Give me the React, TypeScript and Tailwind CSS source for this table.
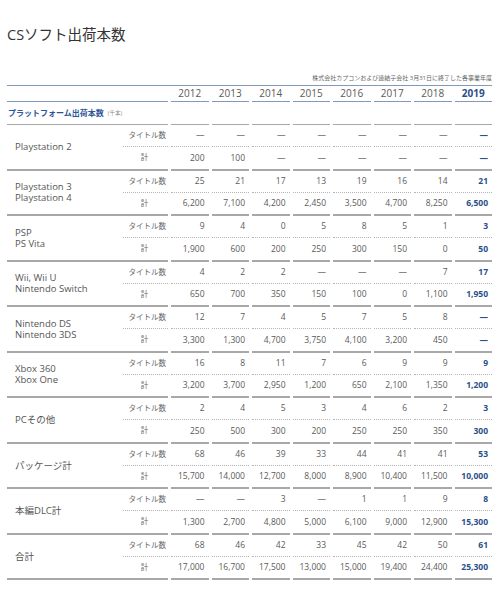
import React from 'react';

const years = ['2012', '2013', '2014', '2015', '2016', '2017', '2018', '2019'];

type Group = { name: string[]; titles: string[]; sales: string[] };

const D = '—';

const groups: Group[] = [
  { name: ['Playstation 2'], titles: [D, D, D, D, D, D, D, D], sales: ['200', '100', D, D, D, D, D, D] },
  {
    name: ['Playstation 3', 'Playstation 4'],
    titles: ['25', '21', '17', '13', '19', '16', '14', '21'],
    sales: ['6,200', '7,100', '4,200', '2,450', '3,500', '4,700', '8,250', '6,500'],
  },
  {
    name: ['PSP', 'PS Vita'],
    titles: ['9', '4', '0', '5', '8', '5', '1', '3'],
    sales: ['1,900', '600', '200', '250', '300', '150', '0', '50'],
  },
  {
    name: ['Wii, Wii U', 'Nintendo Switch'],
    titles: ['4', '2', '2', D, D, D, '7', '17'],
    sales: ['650', '700', '350', '150', '100', '0', '1,100', '1,950'],
  },
  {
    name: ['Nintendo DS', 'Nintendo 3DS'],
    titles: ['12', '7', '4', '5', '7', '5', '8', D],
    sales: ['3,300', '1,300', '4,700', '3,750', '4,100', '3,200', '450', D],
  },
  {
    name: ['Xbox 360', 'Xbox One'],
    titles: ['16', '8', '11', '7', '6', '9', '9', '9'],
    sales: ['3,200', '3,700', '2,950', '1,200', '650', '2,100', '1,350', '1,200'],
  },
  {
    name: ['PCその他'],
    titles: ['2', '4', '5', '3', '4', '6', '2', '3'],
    sales: ['250', '500', '300', '200', '250', '250', '350', '300'],
  },
  {
    name: ['パッケージ計'],
    titles: ['68', '46', '39', '33', '44', '41', '41', '53'],
    sales: ['15,700', '14,000', '12,700', '8,000', '8,900', '10,400', '11,500', '10,000'],
  },
  {
    name: ['本編DLC計'],
    titles: [D, D, '3', D, '1', '1', '9', '8'],
    sales: ['1,300', '2,700', '4,800', '5,000', '6,100', '9,000', '12,900', '15,300'],
  },
  {
    name: ['合計'],
    titles: ['68', '46', '42', '33', '45', '42', '50', '61'],
    sales: ['17,000', '16,700', '17,500', '13,000', '15,000', '19,400', '24,400', '25,300'],
  },
];

const font = { fontFamily: '"Open Sans", "Noto Sans CJK JP", sans-serif' };

export default function App() {
  return (
    <div className="w-[500px] h-[600px] bg-white text-[#5a5a5a]" style={font}>
      <div className="pl-[7px] pr-[8px]">
        <h1 className="pt-[25px] h-[74px] text-[14.5px] leading-[20px] text-[#333] font-normal">CSソフト出荷本数</h1>
        <p className="h-[11px] text-[6px] leading-[8px] text-right text-[#666]">
          株式会社カプコンおよび連結子会社 3月31日に終了した各事業年度
        </p>

        {/* table */}
        <div className="border-t border-[#8399b9] grid grid-cols-[161px_repeat(8,1fr)] gap-x-[3px]">
          {/* year header */}
          <div className="h-[16px] border-b border-[#8399b9]" />
          {years.map((y, i) => (
            <div
              key={y}
              className={
                i === 7
                  ? 'h-[16px] border-b border-[#8399b9] flex items-center justify-center text-[10px] font-bold text-[#2b4f8a]'
                  : 'h-[16px] border-b border-[#8399b9] flex items-center justify-center text-[10px] text-[#5a5a5a]'
              }
            >
              {y}
            </div>
          ))}

          {/* platform header */}
          <div className="h-[23px] border-b-[1.5px] border-[#a8a8a8] flex items-center pl-[1px] gap-[4px]">
            <span className="text-[8px] font-bold text-[#2c5597]">プラットフォーム出荷本数</span>
            <span className="text-[5.5px] text-[#888]">(千本)</span>
          </div>
          {years.map((y) => (
            <div key={y} className="h-[23px] border-b-[1.5px] border-[#a8a8a8]" />
          ))}

          {groups.map((g) => (
            <React.Fragment key={g.name.join()}>
              <div className="h-[45.5px] border-b-2 border-[#a8a8a8] flex">
                <div className="flex-1 flex flex-col justify-center pl-[8px] text-[9.5px] leading-[11px] text-[#555]">
                  {g.name.map((n) => (
                    <span key={n}>{n}</span>
                  ))}
                </div>
                <div className="w-[45px] flex flex-col text-[7.5px] text-[#666]">
                  <div className="flex-1 flex items-center justify-end pr-[2px] border-b border-dotted border-[#b5b5b5]">
                    タイトル数
                  </div>
                  <div className="flex-1 flex items-center justify-center pr-[2px]">計</div>
                </div>
              </div>
              {years.map((y, i) => (
                <div
                  key={y}
                  className={
                    i === 7
                      ? 'h-[45.5px] border-b-2 border-[#a8a8a8] flex flex-col text-[8.5px] font-bold text-[#2b4f8a]'
                      : 'h-[45.5px] border-b-2 border-[#a8a8a8] flex flex-col text-[8.5px] text-[#5a5a5a]'
                  }
                >
                  <div className="flex-1 flex items-center justify-end pr-[4px] border-b border-dotted border-[#b5b5b5]">
                    {g.titles[i]}
                  </div>
                  <div className="flex-1 flex items-center justify-end pr-[4px]">{g.sales[i]}</div>
                </div>
              ))}
            </React.Fragment>
          ))}
        </div>
      </div>
    </div>
  );
}
